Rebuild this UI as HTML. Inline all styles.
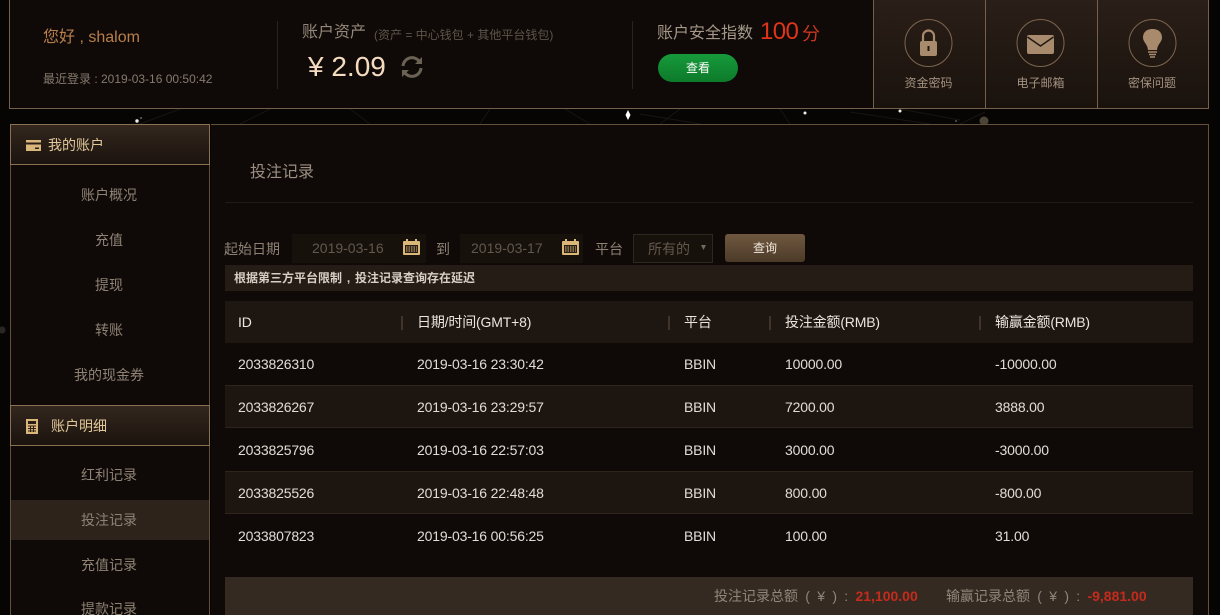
<!DOCTYPE html>
<html lang="zh">
<head>
<meta charset="utf-8">
<title>投注记录</title>
<style>
*{box-sizing:border-box;margin:0;padding:0}
html,body{width:1220px;height:615px;overflow:hidden;background:#070504}
body{position:relative;font-family:"Liberation Sans","Noto Sans CJK SC",sans-serif;color:#a89a8c}
.a{position:absolute;white-space:nowrap;line-height:20px}
#bg{position:absolute;left:0;top:0}
#top{position:absolute;left:9px;top:-1px;width:1200px;height:110px;background:#0f0a08;border:1px solid #75604a}
.vl{position:absolute;top:21px;width:1px;height:68px;background:#2a221b}
.sec{position:absolute;top:-1px;width:113px;height:110px;background:linear-gradient(#2a1f18,#1a120d);border:1px solid #75604a;text-align:center;font-size:12px;color:#a3917f}
.sec svg{position:absolute;left:30px;top:19px}
.sec span{position:absolute;left:-1px;right:1px;top:74px;line-height:18px}
#side{position:absolute;left:10px;top:124px;width:200px;height:491px;background:#0f0a08;border-left:1px solid #64513c;border-right:1px solid #64513c}
.hd{position:absolute;left:-1px;width:200px;height:41px;background:linear-gradient(#33271e,#1b130e);border:1px solid #8a7152;color:#e1c898;font-size:14px;line-height:41px}
.it{position:absolute;left:-1px;width:198px;height:40px;line-height:42px;text-align:center;font-size:14px;color:#8f8275}
#main{position:absolute;left:211px;top:124px;width:998px;height:491px;background:#0f0a08;border-top:1px solid #64513c;border-right:1px solid #64513c}
.inp{position:absolute;height:29px;background:#17110c;font-size:14px;color:#62584c;line-height:29px}
.row{position:absolute;left:225px;width:968px;height:43px}
.row span,.th span{position:absolute;top:0;line-height:43px;font-size:14px;letter-spacing:-.17px;white-space:nowrap;color:#e2dcd5}
.row.e{background:#1d1510;border-top:1px solid #2e241b;border-bottom:1px solid #2e241b}
.th{position:absolute;left:225px;top:301px;width:968px;height:42px;background:#1e1610}
.th span{line-height:42px;color:#ebe5dd}
.th i{position:absolute;top:15px;width:2px;height:14px;background:#40342a}
</style>
</head>
<body>
<svg id="bg" width="1220" height="615" viewBox="0 0 1220 615">
<rect width="1220" height="615" fill="#070504"/>
<g stroke="#181412" stroke-width="1" fill="none">
<path d="M140 124L180 109M240 124L270 109M370 124L350 109M480 124L490 109M590 124L565 109M640 114L700 124M680 109L660 124M790 124L780 109M850 112L930 124M900 109L960 120M960 124L985 112"/>
</g>
<circle cx="137" cy="121" r="1.700" fill="#eee"/>
<circle cx="141" cy="118" r=".7" fill="#bbb"/>
<path d="M628 110L630.500 115L628 120L625.500 115Z" fill="#fff"/>
<circle cx="805" cy="113" r="1.500" fill="#eee"/>
<circle cx="900" cy="111" r="1.500" fill="#eee"/>
<circle cx="956" cy="121" r="1" fill="#555"/>
<circle cx="984" cy="121" r="4.500" fill="#4b4538"/>
<circle cx="2" cy="330" r="3.500" fill="#2a2622"/>
</svg>

<div id="top">
<div class="vl" style="left:267px"></div>
<div class="vl" style="left:622px"></div>
</div>
<div class="a" style="left:43px;top:28px;font-size:16px;color:#b97f4b">您好 , shalom</div>
<div class="a" style="left:43px;top:69px;font-size:12px;color:#85796c">最近登录 : 2019-03-16 00:50:42</div>
<div class="a" style="left:302px;top:23px;font-size:16px;color:#948779">账户资产</div>
<div class="a" style="left:374px;top:25px;font-size:12px;color:#5d5348">(资产 = 中心钱包 + 其他平台钱包)</div>
<div class="a" style="left:308px;top:51px;font-size:28px;line-height:32px;color:#f5dcc0">¥ 2.09</div>
<svg class="a" style="left:400px;top:54px" width="24" height="26" viewBox="0 0 24 26" fill="none" stroke="#6b6254" stroke-width="3">
<path d="M3 12A9 9 0 0 1 19 7"/><path d="M21 14A9 9 0 0 1 5 19"/>
<path d="M22 3V10H15Z" fill="#6b6254" stroke="none"/><path d="M2 23V16H9Z" fill="#6b6254" stroke="none"/>
</svg>
<div class="a" style="left:657px;top:24px;font-size:16px;color:#a59888">账户安全指数</div>
<div class="a" style="left:760px;top:17px;font-size:24px;line-height:30px;letter-spacing:-.6px;color:#e0341a">100</div>
<div class="a" style="left:802px;top:23px;font-size:18px;line-height:22px;color:#c9361e">分</div>
<div class="a" style="left:658px;top:54px;width:80px;height:28px;border-radius:14px;background:linear-gradient(#179a3b,#0d7a2a);color:#fff;font-size:12px;line-height:29px;text-align:center">查看</div>

<div class="sec" style="left:873px">
<svg width="50" height="50" viewBox="0 0 50 50" fill="none"><circle cx="24.500" cy="24" r="23.500" stroke="#7c6650"/><path d="M19 23V17a5.500 5.500 0 0 1 11 0V23" stroke="#a88a6d" stroke-width="2.200"/><rect x="16" y="22" width="17" height="15" rx="2" fill="#a88a6d"/><rect x="23.500" y="27" width="2" height="5" fill="#1f1711"/></svg>
<span>资金密码</span></div>
<div class="sec" style="left:985px">
<svg width="50" height="50" viewBox="0 0 50 50" fill="none"><circle cx="24.500" cy="24" r="23.500" stroke="#7c6650"/><rect x="11" y="16" width="27" height="19" rx="2" fill="#a88a6d"/><path d="M11.500 18L24.500 27L37.500 18" stroke="#1f1711" stroke-width="1.500"/></svg>
<span>电子邮箱</span></div>
<div class="sec" style="left:1097px;width:112px">
<svg width="50" height="50" viewBox="0 0 50 50" fill="none"><circle cx="24.500" cy="24" r="23.500" stroke="#7c6650"/><path d="M24.500 10C17 10 15 15 15 18.500C15 23 19.500 25 20 31H29C29.500 25 34 23 34 18.500C34 15 32 10 24.500 10Z" fill="#a88a6d"/><path d="M20 33H29M21 35.500H28M22 38H27" stroke="#a88a6d" stroke-width="1.500"/></svg>
<span>密保问题</span></div>

<div id="side">
<div class="hd" style="top:0;padding-left:37px">我的账户
<svg style="position:absolute;left:15px;top:15px" width="16" height="11" viewBox="0 0 16 11"><rect width="15" height="11" fill="#d9b679"/><rect y="2.500" width="15" height="2" fill="#2a1f17"/><rect x="9" y="7.500" width="4" height="1.500" fill="#2a1f17"/></svg></div>
<div class="it" style="top:50px">账户概况</div>
<div class="it" style="top:95px">充值</div>
<div class="it" style="top:140px">提现</div>
<div class="it" style="top:185px">转账</div>
<div class="it" style="top:230px">我的现金券</div>
<div class="hd" style="top:281px;padding-left:40px;line-height:40px">账户明细
<svg style="position:absolute;left:15px;top:13px" width="13" height="15" viewBox="0 0 13 15"><rect width="12" height="15" fill="#d9b679"/><rect x="2" y="2" width="8" height="3" fill="#2a1f17"/><path d="M2 7H10M2 9.500H10M2 12H10" stroke="#2a1f17" stroke-width="1"/><path d="M4.500 6.500V13M7.500 6.500V13" stroke="#2a1f17" stroke-width="1"/></svg></div>
<div class="it" style="top:330px">红利记录</div>
<div class="it" style="top:376px;left:0;width:198px;padding-right:2px;line-height:40px;background:#2d231b">投注记录</div>
<div class="it" style="top:420px">充值记录</div>
<div class="it" style="top:464px">提款记录</div>
</div>

<div id="main"></div>
<div class="a" style="left:250px;top:162px;font-size:16px;line-height:21px;color:#9c8f82">投注记录</div>
<div class="a" style="left:225px;top:202px;width:968px;height:1px;line-height:1px;background:#221b15"></div>

<div class="a" style="left:224px;top:239px;font-size:14px;color:#8d8174">起始日期</div>
<div class="inp" style="left:292px;top:234px;width:134px;padding-left:20px">2019-03-16</div>
<div class="a" style="left:436px;top:239px;font-size:14px;color:#8d8174">到</div>
<div class="inp" style="left:460px;top:234px;width:123px;padding-left:11px">2019-03-17</div>
<svg class="a" style="left:403px;top:239px" width="17" height="16" viewBox="0 0 17 16"><rect y="2" width="17" height="14" rx="1" fill="#dcb878"/><rect x="3" y="0" width="2" height="4" fill="#dcb878"/><rect x="12" y="0" width="2" height="4" fill="#dcb878"/><rect x="2" y="6" width="13" height="8" fill="#2a1f17"/><path d="M3 8H14M3 10H14M3 12H14" stroke="#dcb878" stroke-dasharray="1.500 1"/></svg>
<svg class="a" style="left:562px;top:239px" width="17" height="16" viewBox="0 0 17 16"><rect y="2" width="17" height="14" rx="1" fill="#dcb878"/><rect x="3" y="0" width="2" height="4" fill="#dcb878"/><rect x="12" y="0" width="2" height="4" fill="#dcb878"/><rect x="2" y="6" width="13" height="8" fill="#2a1f17"/><path d="M3 8H14M3 10H14M3 12H14" stroke="#dcb878" stroke-dasharray="1.500 1"/></svg>
<div class="a" style="left:595px;top:239px;font-size:14px;color:#8d8174">平台</div>
<div class="inp" style="left:633px;top:234px;width:80px;padding-left:14px;border:1px solid #2e261f;line-height:28px">所有的</div>
<svg class="a" style="left:701px;top:245px" width="5" height="5"><path d="M0 0H5L2.500 5Z" fill="#75695c"/></svg>
<div class="a" style="left:725px;top:234px;width:80px;height:28px;border-radius:3px;background:linear-gradient(#6f583f,#4c3a29);color:#f2e9dd;font-size:12px;line-height:29px;text-align:center">查询</div>

<div class="a" style="left:225px;top:265px;width:968px;height:26px;background:#251c15;font-size:12px;line-height:27px;padding-left:9px;color:#d8d0c6;font-weight:bold;word-spacing:1.500px">根据第三方平台限制 , 投注记录查询存在延迟</div>

<div class="th">
<span style="left:13px">ID</span>
<i style="left:176px"></i><span style="left:192px">日期/时间(GMT+8)</span>
<i style="left:443px"></i><span style="left:459px">平台</span>
<i style="left:544px"></i><span style="left:560px">投注金额(RMB)</span>
<i style="left:754px"></i><span style="left:770px">输赢金额(RMB)</span>
</div>
<div class="row" style="top:343px"><span style="left:13px">2033826310</span><span style="left:192px">2019-03-16 23:30:42</span><span style="left:459px">BBIN</span><span style="left:560px">10000.00</span><span style="left:770px">-10000.00</span></div>
<div class="row e" style="top:385px"><span style="left:13px">2033826267</span><span style="left:192px">2019-03-16 23:29:57</span><span style="left:459px">BBIN</span><span style="left:560px">7200.00</span><span style="left:770px">3888.00</span></div>
<div class="row" style="top:429px"><span style="left:13px">2033825796</span><span style="left:192px">2019-03-16 22:57:03</span><span style="left:459px">BBIN</span><span style="left:560px">3000.00</span><span style="left:770px">-3000.00</span></div>
<div class="row e" style="top:471px"><span style="left:13px">2033825526</span><span style="left:192px">2019-03-16 22:48:48</span><span style="left:459px">BBIN</span><span style="left:560px">800.00</span><span style="left:770px">-800.00</span></div>
<div class="row" style="top:515px"><span style="left:13px">2033807823</span><span style="left:192px">2019-03-16 00:56:25</span><span style="left:459px">BBIN</span><span style="left:560px">100.00</span><span style="left:770px">31.00</span></div>

<div class="a" style="left:225px;top:577px;width:968px;height:38px;background:#352a21"></div>
<div class="a" style="left:714px;top:586px;font-size:14px;color:#92867a;word-spacing:3.400px">投注记录总额 ( ¥ ) : <b style="color:#c42b1c">21,100.00</b></div>
<div class="a" style="left:946px;top:586px;font-size:14px;color:#92867a;word-spacing:3.400px">输赢记录总额 ( ¥ ) : <b style="color:#c42b1c">-9,881.00</b></div>
</body>
</html>
